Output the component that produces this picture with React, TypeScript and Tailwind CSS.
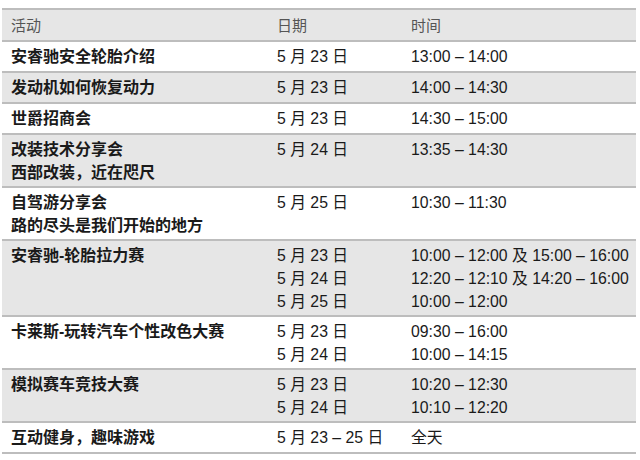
type Row = {
  title: string[];
  dates: string[];
  times: string[];
  shaded: boolean;
};

const rows: Row[] = [
  { title: ["安睿驰安全轮胎介绍"], dates: ["5 月 23 日"], times: ["13:00 – 14:00"], shaded: false },
  { title: ["发动机如何恢复动力"], dates: ["5 月 23 日"], times: ["14:00 – 14:30"], shaded: true },
  { title: ["世爵招商会"], dates: ["5 月 23 日"], times: ["14:30 – 15:00"], shaded: false },
  { title: ["改装技术分享会", "西部改装，近在咫尺"], dates: ["5 月 24 日"], times: ["13:35 – 14:30"], shaded: true },
  { title: ["自驾游分享会", "路的尽头是我们开始的地方"], dates: ["5 月 25 日"], times: ["10:30 – 11:30"], shaded: false },
  {
    title: ["安睿驰-轮胎拉力赛"],
    dates: ["5 月 23 日", "5 月 24 日", "5 月 25 日"],
    times: ["10:00 – 12:00 及 15:00 – 16:00", "12:20 – 12:10 及 14:20 – 16:00", "10:00 – 12:00"],
    shaded: true,
  },
  {
    title: ["卡莱斯-玩转汽车个性改色大赛"],
    dates: ["5 月 23 日", "5 月 24 日"],
    times: ["09:30 – 16:00", "10:00 – 14:15"],
    shaded: false,
  },
  {
    title: ["模拟赛车竞技大赛"],
    dates: ["5 月 23 日", "5 月 24 日"],
    times: ["10:20 – 12:30", "10:10 – 12:20"],
    shaded: true,
  },
  { title: ["互动健身，趣味游戏"], dates: ["5 月 23 – 25 日"], times: ["全天"], shaded: false },
];

export default function App() {
  return (
    <div
      className="w-[640px] h-[460px] bg-white pt-[8px] pl-[2px]"
      style={{ fontFamily: '"Liberation Sans", Arial, "Noto Sans CJK SC", sans-serif' }}
    >
      <div className="w-[634px] border-t-2 border-[#bdbdbd]">
        <div className="grid grid-cols-[266px_134px_1fr] bg-[#e6e6e6] border-b-2 border-[#bdbdbd] pt-[4px] pb-[3px] text-[15px] leading-[23px] text-[#555]">
          <div className="pl-[9px]">活动</div>
          <div className="pl-[9px]">日期</div>
          <div className="pl-[9px]">时间</div>
        </div>

        {rows.map((row, i) => {
          const lines = Math.max(row.title.length, row.dates.length);
          return (
            <div
              key={i}
              className={`grid grid-cols-[266px_134px_1fr] border-b-2 border-[#bdbdbd] pt-[3px] leading-[23px] text-[#1a1a1a] ${
                row.shaded ? "bg-[#e6e6e6]" : "bg-white"
              } ${lines > 1 ? "pb-[2px]" : "pb-[3px]"}`}
            >
              <div className="pl-[9px] text-[16px] font-bold flex flex-col">
                {row.title.map((t) => (
                  <span key={t}>{t}</span>
                ))}
              </div>
              <div className="pl-[9px] text-[15.8px] flex flex-col">
                {row.dates.map((d, j) => (
                  <span key={j}>{d}</span>
                ))}
              </div>
              <div className="pl-[9px] text-[15.8px] flex flex-col whitespace-nowrap">
                {row.times.map((t, j) => (
                  <span key={j}>{t}</span>
                ))}
              </div>
            </div>
          );
        })}
      </div>
    </div>
  );
}
